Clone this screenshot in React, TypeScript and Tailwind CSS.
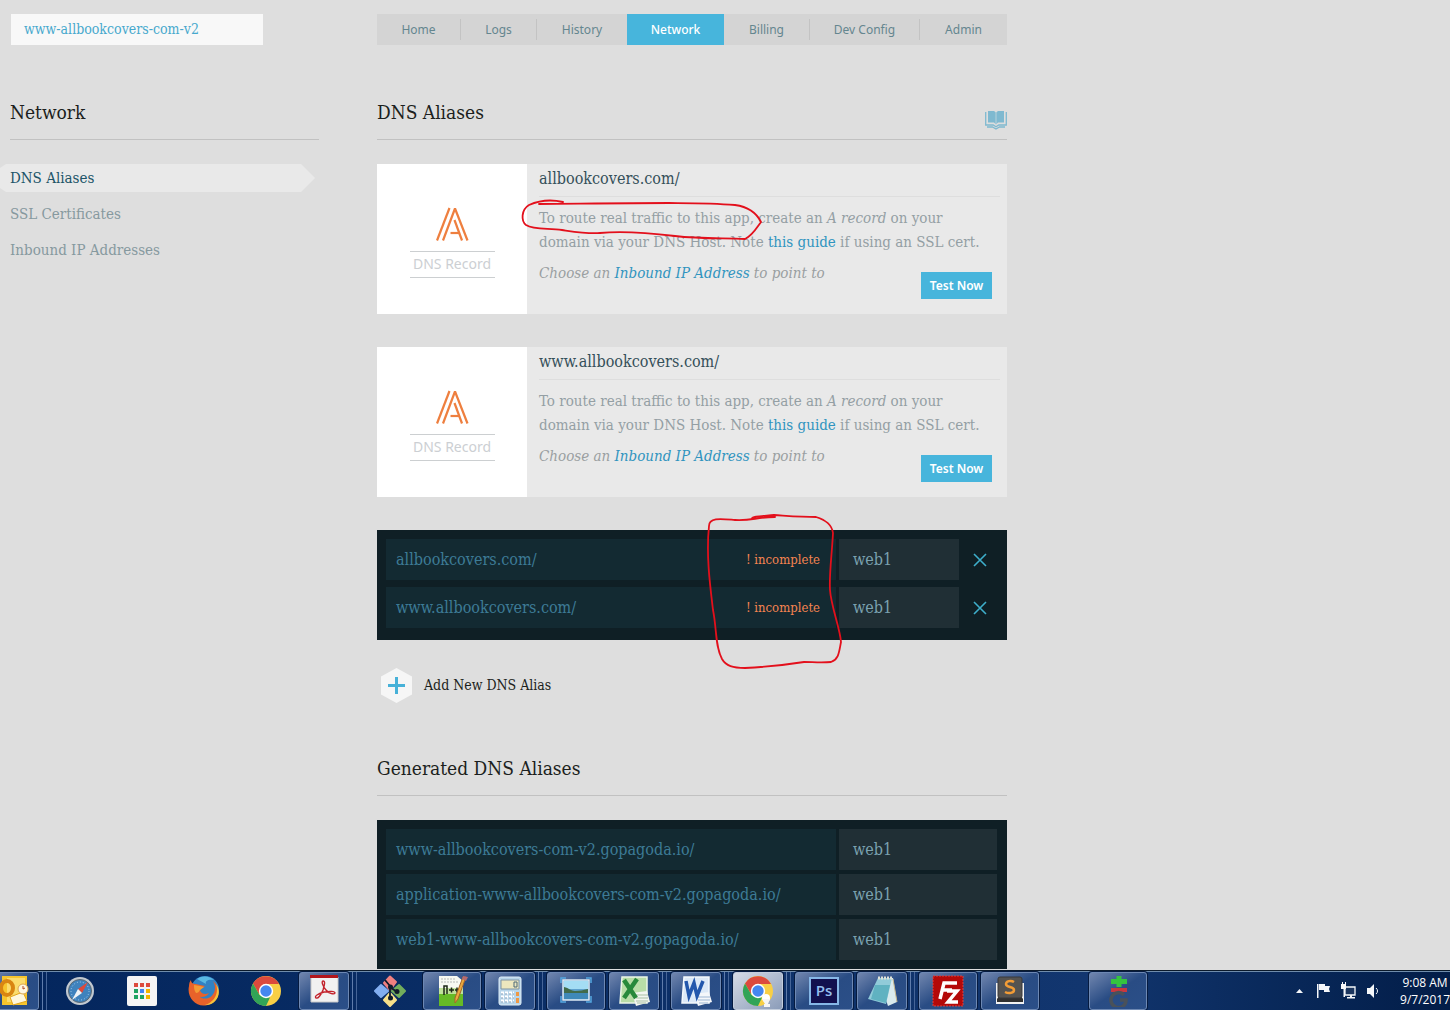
import type { ReactNode } from "react"

const tabs = ["Home", "Logs", "History", "Network", "Billing", "Dev Config", "Admin"]

const sections = ["DNS Aliases", "SSL Certificates", "Inbound IP Addresses"]

const aliases = ["allbookcovers.com/", "www.allbookcovers.com/"]

const generated = [
  "www-allbookcovers-com-v2.gopagoda.io/",
  "application-www-allbookcovers-com-v2.gopagoda.io/",
  "web1-www-allbookcovers-com-v2.gopagoda.io/",
]

function BookIcon() {
  return (
    <svg width="22" height="19" viewBox="0 0 22 19" fill="none" stroke="#7fb9d0">
      <path d="M3 0h6l2 1.500 2-1.500h6v11.500h-6l-2 2-2-2H3z" fill="#7fb9d0" stroke="none" />
      <path d="M11 1v12" stroke="#b9d2db" />
      <path d="M.7 1v13h7.500l2.800 1.800 2.800-1.800h7.500V1" strokeWidth="1.300" />
      <path d="M2 16h5.500L11 18l3.500-2H20" strokeWidth="1.300" />
    </svg>
  )
}

function RecordLogo() {
  return (
    <svg width="34" height="34" viewBox="0 0 34 34" fill="none" stroke="#ee7f3f" strokeWidth="2.200" strokeLinejoin="bevel">
      <path d="M2 33.500 14.500 1" />
      <path d="M8 33.500 20 1.500 32.500 33.500" />
      <path d="M19.500 13 27 33.500" />
      <path d="M15.500 26h9" />
    </svg>
  )
}

function DnsCard({ domain }: { domain: string }) {
  return (
    <article className="mb-[33px] flex h-[150px] bg-[#e9e9e9]">
      <div className="flex w-[150px] shrink-0 flex-col items-center bg-white pt-[43px]">
        <RecordLogo />
        <p className="mt-[10px] w-[85px] border-y border-[#cccfd1] pb-[2px] text-center font-['Noto_Sans',sans-serif] text-[14px] leading-[23px] text-[#cccfd3]">
          DNS Record
        </p>
      </div>

      <div className="flex-1 pr-[7px] pl-3">
        <h3 className="border-b border-[#dedede] pt-[3px] pb-[5px] text-[16px] leading-6 text-[#35505a]">
          {domain}
        </h3>
        <p className="mt-[9px] text-[15px] leading-6 text-[#949fa4]">
          To route real traffic to this app, create an <em>A record</em> on your
          <br />
          domain via your DNS Host. Note{" "}
          <a href="#guide" className="text-[#3094bf]">this guide</a> if using an SSL cert.
        </p>
        <div className="flex justify-between pr-2">
          <p className="mt-[7px] text-[15px] leading-6 text-[#9a9fa1] italic">
            Choose an <a href="#ip" className="text-[#3094bf]">Inbound IP Address</a> to point to
          </p>
          <button className="mt-[18px] h-[27px] w-[71px] bg-[#47b5dc] font-['Noto_Sans',sans-serif] text-[12px] font-semibold text-white">
            Test Now
          </button>
        </div>
      </div>
    </article>
  )
}

function AppTab({ name }: { name: string }) {
  if (name === "Network") {
    return (
      <a href="#network" aria-current="page" className="flex h-full items-center justify-center bg-[#47b5dc] font-medium text-white">
        {name}
      </a>
    )
  }
  const divided = name === "Home" || name === "Logs" || name === "Billing" || name === "Dev Config"
  return (
    <a
      href={`#${name}`}
      className={`flex h-[21px] items-center justify-center ${divided ? "border-r border-[#c3c3c3]" : ""}`}
    >
      {name}
    </a>
  )
}

function Heading({ children, icon }: { children: ReactNode; icon?: ReactNode }) {
  return (
    <div className="flex h-[41px] justify-between border-b border-[#c1c1c1]">
      <h2 className="text-[19px] leading-[26px] text-[#1c1f20]">{children}</h2>
      {icon}
    </div>
  )
}

/* Red pen marks over the page */
function PenMarks() {
  return (
    <svg className="pointer-events-none absolute top-0 left-0" width="1010" height="700" viewBox="0 0 1010 700" fill="none" stroke="#e3101c" strokeWidth="1.800" strokeLinecap="round" strokeLinejoin="round">
      <path d="M563 202C550 199 538 201 529 205C521 210 521 221 526 225C534 230 548 228 562 230C576 232 588 234 600 233C620 231 650 233 675 236C700 239 722 238 745 239C752 236 756 229 761 222C757 214 750 207 735 205C700 202 650 203 539 204" />
      <path d="M752 519C751 516 764 516 774 515C790 516 802 517 816 517C826 520 832 525 833 533C832 553 829 575 830 590C831 606 840 628 841 642C839 652 839 659 831 662C822 663 812 662 804 662C785 665 765 667 745 668C733 668 726 666 722 659C715 646 717 630 713 610C710 585 706 555 709 526C709 517 722 519 735 520C752 521 756 517 775 517" />
    </svg>
  )
}

function TaskButton({ label, stacked, plain, active, children }: { label: string; stacked?: boolean; plain?: boolean; active?: boolean; children: ReactNode }) {
  if (plain) {
    return (
      <button aria-label={label} className="flex h-full w-[58px] shrink-0 items-center justify-center">
        {children}
      </button>
    )
  }
  const glass = active
    ? "border-[#c3cddc] from-[#d5dbe5] to-[#8b9cb9]"
    : "border-[#6d88b3] from-[#7186ae] via-[#294c84] to-[#2b4f88]"
  return (
    <div className="flex h-full w-[58px] shrink-0 gap-[2px]">
      <button
        aria-label={label}
        className={`flex flex-1 items-center justify-center rounded-[3px] border bg-linear-to-br shadow-[0_0_0_1px_#061b40] ${glass}`}
      >
        {children}
      </button>
      {stacked && <span className="w-[2px] border-r border-[#5f7cab]" />}
      {stacked && <span className="w-[2px] border-r border-[#466598]" />}
    </div>
  )
}

function Icon({ children }: { children: ReactNode }) {
  return (
    <svg width="32" height="32" viewBox="0 0 32 32" fill="none" className="shrink-0">
      {children}
    </svg>
  )
}

function ChromeShape() {
  return (
    <>
      <circle cx="16" cy="16" r="15" fill="#f8cf45" />
      <path d="M3 8.500 9 19l7-10h13A15 15 0 0 0 3 8.500z" fill="#dc4a3d" />
      <path d="M3 8.500 9.500 20 16 22.500h4L16 31A15 15 0 0 1 3 8.500z" fill="#31a457" />
      <circle cx="16" cy="16" r="7.200" fill="#fff" />
      <circle cx="16" cy="16" r="5.700" fill="#4587ef" />
    </>
  )
}

function Taskbar() {
  return (
    <footer className="flex h-10 shrink-0 items-center border-t border-[#0b1a2b] bg-linear-to-r from-[#04265d] via-[#12366f] via-75% to-[#031d48] font-['Open_Sans',sans-serif] shadow-[inset_0_1px_0_#6f8cab]">
      <div className="-ml-[11px] flex h-full min-w-0 items-center gap-1 pt-px">
        <TaskButton label="Outlook" stacked>
          <Icon>
            <path d="M4 1h25v29H4z" fill="#f7c52d" />
            <path d="M9 3h18v24H9z" fill="#fbdc6d" />
            <path d="M12 22l13-5 4 9-14 4z" fill="#fff7dd" stroke="#e2a51c" />
            <ellipse cx="9" cy="13" rx="6" ry="7" stroke="#d98512" strokeWidth="4" />
            <circle cx="25" cy="14" r="5" fill="#fff6e0" stroke="#dba74f" />
            <path d="M25 11v3l2-1" stroke="#b14722" />
          </Icon>
        </TaskButton>
        <TaskButton label="Safari" plain>
          <Icon>
            <circle cx="16" cy="16" r="14" fill="#c2c9d0" />
            <circle cx="16" cy="16" r="11.500" fill="#3e82bd" stroke="#5d6870" />
            <circle cx="16" cy="16" r="9" stroke="#a9d0ee" strokeDasharray="1 2" />
            <path d="M24 7 14 14l4 4z" fill="#dd4a3a" />
            <path d="M8 25l6-11 4 4z" fill="#eef3f6" />
          </Icon>
        </TaskButton>
        <TaskButton label="Apps" plain>
          <Icon>
            <rect x="1" y="1" width="30" height="30" rx="2" fill="#f5f5f5" />
            <path d="M8 8h4v4H8zM14 8h4v4h-4zM20 8h4v4h-4z" fill="#dd4b3e" />
            <path d="M8 14h4v4H8z" fill="#1ea362" />
            <path d="M14 14h4v4h-4z" fill="#4285f4" />
            <path d="M20 14h4v4h-4zM20 20h4v4h-4z" fill="#f4b400" />
            <path d="M8 20h4v4H8zM14 20h4v4h-4z" fill="#1ea362" />
          </Icon>
        </TaskButton>
        <TaskButton label="Firefox" plain>
          <Icon>
            <circle cx="17" cy="15" r="14" fill="#3282c4" />
            <path d="M9 4c5-4 13-3 17 1-6-1-9 1-8 4z" fill="#5ab9e2" />
            <path d="M3 5c0 3 2 4 5 4l4 1 5 1-5 4c1 4 5 5 9 3-2 4-8 5-10 3 6 6 16 1 16-8 0-3-1-5-2-7 8 7 7 18-1 22C11 36-2 24 1 11c0-3 1-5 2-6z" fill="#e8622a" />
            <path d="M28 9c3 8-1 18-11 21 11 1 18-12 11-21z" fill="#f7c23a" />
            <path d="M6 10l6 1 4 1-4 3c-1 2-2 3-4 3-2-3-2-5-2-8z" fill="#f39b35" />
          </Icon>
        </TaskButton>
        <TaskButton label="Chrome" plain>
          <Icon>
            <ChromeShape />
          </Icon>
        </TaskButton>
        <TaskButton label="Adobe Reader" stacked>
          <Icon>
            <path d="M3 2h27v25H3z" fill="#f1f1f1" stroke="#c8c8c8" />
            <path d="M2 0h28v3H2z" fill="#b2161c" />
            <path d="M15 6c3 0 1 5 0 9-2 5-5 9-7 8-2-2 2-4 8-6 5-1 11-1 11 1-1 2-7 0-9-3-3-3-5-9-3-9z" stroke="#c3222b" strokeWidth="1.400" />
          </Icon>
        </TaskButton>
        <TaskButton label="Git" plain>
          <Icon>
            <path d="M16 1.500 22 7l-6 8-6-7z" fill="#f08080" stroke="#f08080" strokeWidth="2" strokeLinejoin="round" />
            <path d="M25 10l6 6-6 6-7-6z" fill="#72ad5c" stroke="#72ad5c" strokeWidth="2" strokeLinejoin="round" />
            <path d="M7 10l7 6-7 6-6-6z" fill="#82aef0" stroke="#82aef0" strokeWidth="2" strokeLinejoin="round" />
            <path d="M16 18l6 7-6 6-6-6z" fill="#f7e08a" stroke="#f7e08a" strokeWidth="2" strokeLinejoin="round" />
            <path d="M11 5l5 6v12M16 12l7 5" stroke="#111c2b" strokeWidth="1.800" />
            <circle cx="16.500" cy="12" r="2.500" fill="#111c2b" />
            <circle cx="23" cy="16.500" r="2.500" fill="#111c2b" />
            <circle cx="16.500" cy="23" r="2.500" fill="#111c2b" />
          </Icon>
        </TaskButton>
        <TaskButton label="Notepad++">
          <Icon>
            <path d="M3 1h18l6 5v25H3z" fill="#f7f9f2" />
            <path d="M3 18h24v13H3z" fill="#66ba26" />
            <path d="M3 13h24v6H3z" fill="#c0e29a" />
            <path d="M5 4h14M5 7h18" stroke="#b6b9b7" strokeDasharray="2 1" />
            <path d="M8 20v-9h3v8M13 15h5M15.500 12.500v5M19 15h4M21 12.500v5" stroke="#1c2716" strokeWidth="1.500" />
            <path d="M30 2 22 24l-3 4v-5L27 2z" fill="#eaaa3e" stroke="#a6652a" />
            <path d="M27 1l5 1-2 4-4-2z" fill="#b36a70" />
          </Icon>
        </TaskButton>
        <TaskButton label="Calculator" stacked>
          <Icon>
            <rect x="5" y="2" width="22" height="28" rx="2" fill="#b7d5ea" stroke="#e1eef7" />
            <path d="M7 5h18v9H7z" fill="#eee7be" stroke="#8194a2" />
            <path d="M20 7h3v5h-3z" stroke="#4d6879" />
            <path d="M7 18h13M7 22h13M7 26h13" stroke="#fff" strokeWidth="3" strokeDasharray="3 1" />
            <path d="M7 19h13M7 23h13M7 27h13" stroke="#7898b6" strokeDasharray="2 2" />
            <path d="M22 17h3v4h-3zM22 23h3v5h-3z" fill="#ef9844" />
          </Icon>
        </TaskButton>
        <TaskButton label="Pictures">
          <Icon>
            <path d="M3 5h26v20H3z" fill="#5fa2ce" stroke="#dce9f4" strokeWidth="1.500" />
            <path d="M4 6h24v8H4z" fill="#a4ddf4" />
            <path d="M4 12c5 1 7 4 11 4 5 0 8-1 13-2v4H4z" fill="#416b4a" />
            <path d="M4 18h24v6H4z" fill="#3f89b8" />
            <path d="M1 8V3h5M26 3h5v5M31 21v6h-5M6 27H1v-6" stroke="#56a8e1" strokeWidth="1.500" />
          </Icon>
        </TaskButton>
        <TaskButton label="Excel" stacked>
          <Icon>
            <path d="M4 2h25v26H2z" fill="#b8dda7" stroke="#eaf6e7" strokeWidth="1.500" />
            <path d="M14 18l15-2 3 11-14 4z" fill="#f2f6f0" />
            <path d="M17 20h13M18 23h12M18 26h12M19 28h9" stroke="#a9c1a5" />
            <path d="M6 5 18 23M19 4 6 23" stroke="#27893b" strokeWidth="4.500" />
          </Icon>
        </TaskButton>
        <TaskButton label="Word" stacked>
          <Icon>
            <path d="M4 2h25v26H2z" fill="#dce9f7" stroke="#f4f9fd" strokeWidth="1.500" />
            <path d="M14 19l15-2 3 10-14 4z" fill="#f4f7fa" />
            <path d="M18 22h12M18 25h12M19 28h9" stroke="#9db6d2" />
            <path d="M6 6l3 15 5-13 3 13 6-15" stroke="#2257ac" strokeWidth="3.500" />
          </Icon>
        </TaskButton>
        <TaskButton label="Chrome window" stacked active>
          <Icon>
            <ChromeShape />
            <circle cx="24" cy="23" r="4" fill="#fff" />
            <path d="M20 24h8l-2 5h2v3h-6v-3h1z" fill="#f5f5f5" />
          </Icon>
        </TaskButton>
        <TaskButton label="Photoshop">
          <svg width="30" height="28" viewBox="0 0 30 28">
            <path d="M1 1h28v26H1z" fill="#12104f" stroke="#86b7e7" strokeWidth="2" />
            <text x="15" y="19" textAnchor="middle" fontSize="15" fontWeight="600" fill="#93bdef">Ps</text>
          </svg>
        </TaskButton>
        <TaskButton label="Notepad" stacked>
          <Icon>
            <path d="M12 3h15l4 24-9 4z" fill="#d9eaed" />
            <path d="M12 3h14l-6 26-18-5z" fill="#91cbd9" />
            <path d="M9 10h15l-4 18-15-4z" fill="#4ba6b7" opacity=".7" />
            <path d="M12 3h15" stroke="#dfe2d8" strokeWidth="3" strokeDasharray="2 1" />
            <path d="M27 4l4 23" stroke="#c7b78c" />
          </Icon>
        </TaskButton>
        <TaskButton label="FileZilla">
          <Icon>
            <path d="M1 1h30v30H1z" fill="#b40909" stroke="#d84343" strokeDasharray="2 1" />
            <path d="M8 24 12 8h13M9 15h11M15 16h10l-9 11h10" stroke="#fff" strokeWidth="3.500" />
          </Icon>
        </TaskButton>
        <TaskButton label="Sublime Text">
          <Icon>
            <path d="M2 8h28v21H2z" fill="#f2f2f2" />
            <path d="M3 24l2-3h22l2 3v3H3z" fill="#303030" />
            <rect x="4" y="2" width="24" height="21" rx="2" fill="#555350" stroke="#38393b" />
            <path d="M20 7c-3-2-8-1-8 2 0 4 8 2 8 6 0 3-5 4-9 2" stroke="#f29c36" strokeWidth="2.500" />
          </Icon>
        </TaskButton>
        <div className="ml-[46px] h-full">
          <TaskButton label="Transfer">
            <Icon>
              <path d="M17 1v11M9 6.500h16" stroke="#35c43e" strokeWidth="5" />
              <path d="M9 13h16v4H9z" fill="#c8383e" />
              <path d="M22 20a7.500 7.500 0 1 0 2 5h-6" stroke="#49515a" strokeWidth="3.500" />
            </Icon>
          </TaskButton>
        </div>
      </div>

      <div className="ml-auto flex items-center text-white">
        <svg width="94" height="20" viewBox="0 0 94 20" fill="#f5f7fa" className="mr-[14px]">
          <path d="M4 12l3.500-4 3.500 4z" />
          <path d="M25 3h1.500v14H25zM27 3h6v2h5l-1 3 1 3h-6V9h-5z" />
          <path d="M53 6h10v8H53z" fill="#1b355e" stroke="#f5f7fa" strokeWidth="1.300" />
          <path d="M55 16h8v1.500h-8zM58 14h2v2h-2zM49 3h5v5h-1v8h-1.500V8H49zM50 1h1v2h-1zM53 1h1v2h-1z" />
          <path d="M75 7h3l4-4v14l-4-4h-3z" />
          <path d="M84 7c2 1.500 2 4.500 0 6" fill="none" stroke="#f5f7fa" />
        </svg>
        <time className="text-center text-[12px] leading-[17px] whitespace-nowrap">
          9:08 AM
          <br />
          9/7/2017
        </time>
      </div>
    </footer>
  )
}

export default function App() {
  return (
    <div className="flex h-screen flex-col bg-[#dedede] font-['DejaVu_Serif_Condensed','DejaVu_Serif',serif]">
      <div className="relative min-h-0 flex-1 overflow-hidden">
        <div className="flex gap-[58px] pt-[14px] pl-[10px]">

          <aside className="w-[309px] shrink-0">
            <a href="#app" className="ml-px flex h-[31px] w-[252px] items-center bg-[#f8f8f8] pl-[13px] text-[14px] text-[#47a8cd]">
              www-allbookcovers-com-v2
            </a>

            <div className="mt-[54px]">
              <Heading>Network</Heading>
            </div>

            <nav className="mt-6 -ml-[10px] flex flex-col gap-2 text-[15px] text-[#86999f]">
              {sections.map((name, i) => (
                <a
                  key={name}
                  href={`#${name}`}
                  className={`flex h-7 w-[315px] items-center pl-[10px] ${
                    i === 0
                      ? "bg-[#e9e9e9] text-[#205468] [clip-path:polygon(0_4px,6px_0,301px_0,100%_50%,301px_100%,6px_100%,0_24px)]"
                      : ""
                  }`}
                >
                  {name}
                </a>
              ))}
            </nav>
          </aside>

          <main className="max-w-[630px] flex-1">
            <nav className="grid h-[31px] grid-cols-[84fr_76fr_90fr_97fr_86fr_110fr_87fr] items-center bg-[#d4d4d4] font-['Noto_Sans',sans-serif] text-[12px] text-[#64868f]">
              {tabs.map((name) => (
                <AppTab key={name} name={name} />
              ))}
            </nav>

            <div className="mt-[54px] mb-6">
              <Heading icon={<a href="#docs" aria-label="Documentation" className="mt-3"><BookIcon /></a>}>
                DNS Aliases
              </Heading>
            </div>

            {aliases.map((domain) => (
              <DnsCard key={domain} domain={domain} />
            ))}

            <div className="bg-[#0f1f25] pt-[2px] pr-[7px] pb-[5px] pl-[6px]">
              <table className="w-full table-fixed border-separate border-spacing-x-[3px] border-spacing-y-[7px] text-[16px]">
                <tbody>
                  {aliases.map((domain) => (
                    <tr key={domain} className="h-[41px]">
                      <td className="bg-[#132a32] px-[10px] py-0">
                        <div className="flex items-center justify-between pr-[6px]">
                          <a href={`#${domain}`} className="text-[#3d7b96]">{domain}</a>
                          <span className="text-[13px] text-[#f58451]">! incomplete</span>
                        </div>
                      </td>
                      <td className="w-[120px] bg-[#202f35] py-0 pl-[14px] text-[#7ba2b0]">web1</td>
                      <td className="w-[35px] p-0 text-center">
                        <button aria-label={`Remove ${domain}`} className="align-middle">
                          <svg width="14" height="14" viewBox="0 0 14 14" stroke="#3eaecb" strokeWidth="1.600">
                            <path d="M1 1l12 12M13 1 1 13" />
                          </svg>
                        </button>
                      </td>
                    </tr>
                  ))}
                </tbody>
              </table>
            </div>

            <button className="mt-7 flex h-[35px] items-center pl-1 text-[14px] text-[#1c1f20]">
              <svg width="31" height="35" viewBox="0 0 31 35" className="mr-3">
                <path d="M15.500 0 31 8.500v18L15.500 35 0 26.500v-18z" fill="#f6f6f6" />
                <path d="M15.500 9v17M7 17.500h17" stroke="#47b1d8" strokeWidth="3" />
              </svg>
              Add New DNS Alias
            </button>

            <div className="mt-[52px] mb-6">
              <Heading>Generated DNS Aliases</Heading>
            </div>

            <div className="bg-[#0f1f25] pt-[5px] pr-[7px] pb-[5px] pl-[6px]">
              <table className="w-full table-fixed border-separate border-spacing-x-[3px] border-spacing-y-[4px] text-[16px]">
                <tbody>
                  {generated.map((domain) => (
                    <tr key={domain} className="h-[41px]">
                      <td className="bg-[#132a32] px-[10px] py-0">
                        <a href={`#${domain}`} className="text-[#3d7b96]">{domain}</a>
                      </td>
                      <td className="w-[158px] bg-[#202f35] py-0 pl-[14px] text-[#7ba2b0]">web1</td>
                    </tr>
                  ))}
                </tbody>
              </table>
            </div>
          </main>

        </div>
        <PenMarks />
      </div>

      <Taskbar />
    </div>
  )
}
